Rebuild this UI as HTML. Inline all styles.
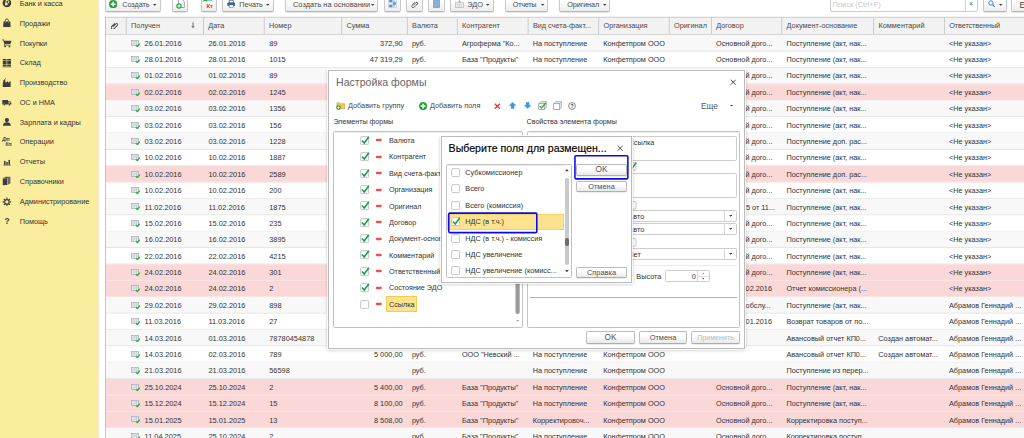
<!DOCTYPE html>
<html><head><meta charset="utf-8"><title>1C</title>
<style>
*{box-sizing:border-box;margin:0;padding:0}
html,body{width:1024px;height:438px;overflow:hidden;background:#fff}
body{font-family:"Liberation Sans",sans-serif;font-size:7.3px;color:#333;position:relative}
.a{position:absolute;white-space:nowrap}
.t{height:12px;line-height:12px}
#side{left:0;top:0;width:98px;height:438px;background:#fbed9e}
#sideshadow{left:98px;top:0;width:2px;height:438px;background:linear-gradient(90deg,#ebe5c4,#fff)}
.btn{top:-6px;height:18px;border:1px solid #c8c8c8;border-bottom-color:#b6b6b6;border-radius:2px;background:linear-gradient(#fff 35%,#ececec);box-shadow:0 0.6px 0.8px rgba(0,0,0,.11)}
.dlg{background:#fff;box-shadow:0 0 0 1px rgba(255,255,255,.8),0 0.5px 3px 1px rgba(0,0,0,.2);border:1px solid #bbbbbb}
.box{border:1px solid #c2c2c2;border-radius:1.5px;background:#fff;box-shadow:inset 0 1px 0.5px #ececec}
.inp{border:1px solid #cdcdcd;border-radius:1.5px;background:#fff}
.dbtn{border:1px solid #bcbcbc;border-bottom-color:#adadad;border-radius:2px;background:linear-gradient(#fff 35%,#e9e9e9);box-shadow:0 0.6px 0.6px rgba(0,0,0,.15)}
.d{font-size:7.4px}
</style></head><body>
<svg width="0" height="0" style="position:absolute"><defs>
<symbol id="doc" viewBox="0 0 9 7.5"><rect x="0.4" y="0.5" width="7" height="4.9" fill="#e8ecf1" stroke="#a3abb8" stroke-width="0.7"/><path d="M1.4 1.9h3.6M1.4 3h3.6M1.4 4.1h2.6" stroke="#bcc3cd" stroke-width="0.55"/><path d="M5.7 0.8v4.4" stroke="#aab2be" stroke-width="0.6"/><path d="M4.9 5.1l1.5 1.6l2.4-3" fill="none" stroke="#2fae3a" stroke-width="1.3"/></symbol>
<symbol id="plus" viewBox="0 0 8 8"><circle cx="4" cy="4" r="3.9" fill="#25a23c"/><path d="M4 1.7v4.6M1.7 4h4.6" stroke="#fff" stroke-width="1.5"/></symbol>
<symbol id="copydoc" viewBox="0 0 9 10"><path d="M2.5 0.4h3.5l2.3 2.3v5.8h-5.8z" fill="#fff" stroke="#6e7f99" stroke-width="0.7"/><circle cx="3" cy="7" r="2.7" fill="#25a23c"/><path d="M3 5.3v3.4M1.3 7h3.4" stroke="#fff" stroke-width="1"/></symbol>
<symbol id="printer" viewBox="0 0 10 9"><rect x="2.5" y="0.4" width="5" height="3" fill="#fff" stroke="#3b5a88" stroke-width="0.7"/><rect x="0.4" y="3" width="9.2" height="3.8" rx="0.8" fill="#3b5f96"/><rect x="2.5" y="5.6" width="5" height="3" fill="#fff" stroke="#3b5a88" stroke-width="0.7"/></symbol>
<symbol id="struct" viewBox="0 0 9 9"><rect x="0.3" y="0.3" width="8.4" height="8.4" fill="#e4edf6" stroke="#a9c1dc" stroke-width="0.5"/><rect x="1.200" y="1" width="3" height="2.3" fill="#5b8fc4"/><rect x="4.8" y="3.4" width="3" height="2.3" fill="#5b8fc4"/><rect x="1.200" y="5.800" width="3" height="2.3" fill="#5b8fc4"/><path d="M4.2 2.1h2.100v1.300M6.300 5.700v1.300h-2.100" fill="none" stroke="#6f9ccc" stroke-width="0.7"/></symbol>
<symbol id="clip" viewBox="0 0 9 9"><path d="M2.2 5.8l3.6-3.6a1.2 1.2 0 0 1 1.8 1.8l-4 4a1.9 1.9 0 0 1-2.7-2.7l3.8-3.8" fill="none" stroke="#777" stroke-width="0.9"/></symbol>
<symbol id="clip2" viewBox="0 0 9 9"><path d="M2.2 5.8l3.6-3.6a1.2 1.2 0 0 1 1.8 1.8l-4 4a1.9 1.9 0 0 1-2.7-2.7l3.8-3.800" fill="none" stroke="#555" stroke-width="1.25"/></symbol>
<symbol id="sheet" viewBox="0 0 7 9"><rect x="0.4" y="0.4" width="6.2" height="8.2" fill="#7ea6cf" stroke="#6d97c3" stroke-width="0.6"/><path d="M1.2 2.3h4.600M1.200 3.900h4.600M1.200 5.500h4.600M1.200 7.100h4.600" stroke="#a9c4e0" stroke-width="0.6"/></symbol>
<symbol id="edo" viewBox="0 0 9 9"><rect x="0.5" y="3.800" width="8" height="4.600" fill="#efefef" stroke="#b3b3b3" stroke-width="0.7"/><path d="M2 5.400h5M2 6.900h5" stroke="#c2c2c2" stroke-width="0.6"/><path d="M4.500 0.300v3M3.100 1.900l1.400 1.500l1.400-1.500" fill="none" stroke="#ababab" stroke-width="0.8"/></symbol>
<symbol id="mag" viewBox="0 0 8 8"><circle cx="3.1" cy="3.1" r="2.3" fill="#eef5fc" stroke="#3f84cc" stroke-width="1"/><path d="M4.800 4.800l2.500 2.500" stroke="#3f84cc" stroke-width="1.3"/></symbol>
<symbol id="cbon" viewBox="0 0 9 9"><rect x="0.6" y="0.6" width="7.4" height="7.4" rx="1" fill="#fff" stroke="#b0b0b0" stroke-width="0.7"/><path d="M1.9 4.1l2 2.4L8.3 0.6" fill="none" stroke="#17a047" stroke-width="1.5"/></symbol>
<symbol id="cboff" viewBox="0 0 9 9"><rect x="0.6" y="0.6" width="7.4" height="7.4" rx="1" fill="#fff" stroke="#b0b0b0" stroke-width="0.7"/></symbol>
<symbol id="folderplus" viewBox="0 0 10 10"><path d="M1 2h3l0.8 1H9.5V8.5H1z" fill="#f2c75c" stroke="#c79a2b" stroke-width="0.6"/><circle cx="2.7" cy="7.2" r="2.5" fill="#25a23c"/><path d="M2.7 5.7v3M1.2 7.2h3" stroke="#fff" stroke-width="0.9"/></symbol>
<symbol id="chkall" viewBox="0 0 9 9"><path d="M0.6 2.7L2.6 0.6H8.5V6.3L6.6 8.4" fill="#dfe6ec" stroke="#8fa0b0" stroke-width="0.6"/><path d="M6.6 2.700L8.5 0.6" stroke="#8fa0b0" stroke-width="0.6"/><rect x="0.6" y="2.7" width="6" height="5.7" fill="#fff" stroke="#7f92a5" stroke-width="0.7"/><path d="M1.700 5.2l1.700 1.800L7.700 2" fill="none" stroke="#45ac2a" stroke-width="1.5"/></symbol>
<symbol id="unchkall" viewBox="0 0 9 9"><path d="M0.6 2.7L2.6 0.6H8.5V6.3L6.6 8.4" fill="#dfe6ec" stroke="#8fa0b0" stroke-width="0.6"/><path d="M6.6 2.700L8.5 0.6" stroke="#8fa0b0" stroke-width="0.6"/><rect x="0.6" y="2.7" width="6" height="5.7" fill="#fff" stroke="#7f92a5" stroke-width="0.7"/></symbol>
<symbol id="s0" viewBox="0 0 10 10"><circle cx="5" cy="5" r="4.4" fill="#3d3d3d"/><path d="M4.1 7.8V2.500h1.500a1.450 1.450 0 0 1 0 2.900H3.100M3.100 6.600h2.700" fill="none" stroke="#fbed9e" stroke-width="1"/></symbol>
<symbol id="s1" viewBox="0 0 10 10"><path d="M1.5 3.6h7l0.3 5.6H1.2z" fill="#3d3d3d"/><path d="M3.4 4.6V2.6a1.6 1.6 0 0 1 3.2 0v2" fill="none" stroke="#3d3d3d" stroke-width="0.9"/><path d="M3.4 3.8v1M6.6 3.8v1" stroke="#fbed9e" stroke-width="0.6"/></symbol>
<symbol id="s2" viewBox="0 0 10 10"><path d="M0.3 1.6h1.6l0.5 1.2h7.3l-1.2 3.6H3l-0.3 0.9h6v0.7H1.7l0.7-1.7L1.3 2.4H0.3z" fill="#3d3d3d"/><circle cx="3.2" cy="8.8" r="0.9" fill="#3d3d3d"/><circle cx="7.6" cy="8.8" r="0.9" fill="#3d3d3d"/></symbol>
<symbol id="s3" viewBox="0 0 10 10"><rect x="0.8" y="1" width="3.9" height="1.6" fill="#3d3d3d"/><rect x="5.3" y="1" width="3.9" height="1.6" fill="#3d3d3d"/><rect x="0.8" y="3.1" width="3.9" height="3" fill="#3d3d3d"/><rect x="5.3" y="3.1" width="3.9" height="3" fill="#3d3d3d"/><rect x="0.8" y="6.6" width="3.9" height="2" fill="#3d3d3d"/><rect x="5.3" y="6.6" width="3.9" height="2" fill="#3d3d3d"/><rect x="0.5" y="8.9" width="9" height="0.6" fill="#3d3d3d"/></symbol>
<symbol id="s4" viewBox="0 0 10 10"><path d="M0.8 9.2V5.2l1-3.4h1.4l0.6 3 2.4-1.8v1.8l2.6-1.8v6.2z" fill="#3d3d3d"/><path d="M2.6 1.5l1.3-1" stroke="#3d3d3d" stroke-width="0.8"/></symbol>
<symbol id="s5" viewBox="0 0 10 10"><path d="M0.3 3h5.9v4.6H0.3zM6.5 4.2h1.8l1.3 1.6v1.8H6.5z" fill="#3d3d3d"/><circle cx="2.3" cy="7.9" r="1.1" fill="#3d3d3d" stroke="#fbed9e" stroke-width="0.4"/><circle cx="7.6" cy="7.9" r="1.1" fill="#3d3d3d" stroke="#fbed9e" stroke-width="0.4"/><rect x="7.1" y="4.8" width="1.5" height="1.1" fill="#fbed9e"/></symbol>
<symbol id="s6" viewBox="0 0 10 10"><circle cx="5" cy="3.1" r="2.2" fill="#3d3d3d"/><path d="M1 9c0-2.6 1.6-3.6 4-3.6S9 6.400 9 9z" fill="#3d3d3d"/></symbol>
<symbol id="s7" viewBox="0 0 10 10"><text x="0.2" y="4.4" font-size="4.8" font-family="Liberation Sans" font-weight="bold" font-style="italic" fill="#3d3d3d">Дт</text><text x="3.6" y="9" font-size="4.6" font-family="Liberation Sans" font-weight="bold" font-style="italic" fill="#3d3d3d">Кт</text></symbol>
<symbol id="s8" viewBox="0 0 10 10"><rect x="2" y="4" width="1.600" height="3.800" fill="#3d3d3d"/><rect x="4.3" y="5.200" width="1.600" height="2.600" fill="#3d3d3d"/><rect x="6.600" y="3" width="1.600" height="4.800" fill="#3d3d3d"/><rect x="1.300" y="7.800" width="7.600" height="0.800" fill="#3d3d3d"/></symbol>
<symbol id="s9" viewBox="0 0 10 10"><path d="M0.8 2.6l4.6-0.4v7L0.8 9.4z" fill="#3d3d3d"/><path d="M5.8 2.1l2.8-1.3v6.6L5.8 9.1z" fill="#6a6a6a"/><path d="M0.8 2.4l3.2-1.6h4.6l-3 1.4z" fill="#555"/></symbol>
<symbol id="s10" viewBox="0 0 10 10"><circle cx="5" cy="5" r="2.3" fill="none" stroke="#3d3d3d" stroke-width="1.2"/><path d="M5 0.6v1.7M5 7.7v1.7M0.6 5h1.7M7.7 5h1.7M1.9 1.9l1.2 1.2M6.9 6.9l1.2 1.2M8.1 1.9L6.9 3.1M3.1 6.9L1.9 8.1" stroke="#3d3d3d" stroke-width="1.1"/></symbol>
<symbol id="s11" viewBox="0 0 10 10"><text x="5.3" y="8.400" font-size="8.600" font-family="Liberation Sans" font-weight="bold" text-anchor="middle" fill="#3d3d3d">?</text></symbol>
</defs></svg>

<div id="side" class="a"></div><div id="sideshadow" class="a"></div>
<div class="a t " style="left:19.7px;top:-2px;">Банк и касса</div>
<svg class="a" style="left:2.2px;top:-1.60px" width="9.8" height="9.8" viewBox="0 0 10 10"><use href="#s0"/></svg>
<div class="a t " style="left:19.7px;top:18px;">Продажи</div>
<svg class="a" style="left:2.2px;top:18.20px" width="9.8" height="9.8" viewBox="0 0 10 10"><use href="#s1"/></svg>
<div class="a t " style="left:19.7px;top:38px;">Покупки</div>
<svg class="a" style="left:2.2px;top:37.80px" width="9.8" height="9.8" viewBox="0 0 10 10"><use href="#s2"/></svg>
<div class="a t " style="left:19.7px;top:57px;">Склад</div>
<svg class="a" style="left:2.2px;top:57.80px" width="9.8" height="9.8" viewBox="0 0 10 10"><use href="#s3"/></svg>
<div class="a t " style="left:19.7px;top:77px;">Производство</div>
<svg class="a" style="left:2.2px;top:77.60px" width="9.8" height="9.8" viewBox="0 0 10 10"><use href="#s4"/></svg>
<div class="a t " style="left:19.7px;top:97px;">ОС и НМА</div>
<svg class="a" style="left:2.2px;top:97.40px" width="9.8" height="9.8" viewBox="0 0 10 10"><use href="#s5"/></svg>
<div class="a t " style="left:19.7px;top:117px;">Зарплата и кадры</div>
<svg class="a" style="left:2.2px;top:117.20px" width="9.8" height="9.8" viewBox="0 0 10 10"><use href="#s6"/></svg>
<div class="a t " style="left:19.7px;top:136px;">Операции</div>
<svg class="a" style="left:2.2px;top:137.00px" width="9.8" height="9.8" viewBox="0 0 10 10"><use href="#s7"/></svg>
<div class="a t " style="left:19.7px;top:156px;">Отчеты</div>
<svg class="a" style="left:2.2px;top:156.80px" width="9.8" height="9.8" viewBox="0 0 10 10"><use href="#s8"/></svg>
<div class="a t " style="left:19.7px;top:176px;">Справочники</div>
<svg class="a" style="left:2.2px;top:176.30px" width="9.8" height="9.8" viewBox="0 0 10 10"><use href="#s9"/></svg>
<div class="a t " style="left:19.7px;top:196px;">Администрирование</div>
<svg class="a" style="left:2.2px;top:197.00px" width="9.8" height="9.8" viewBox="0 0 10 10"><use href="#s10"/></svg>
<div class="a t " style="left:19.7px;top:216px;">Помощь</div>
<svg class="a" style="left:2.2px;top:216.20px" width="9.8" height="9.8" viewBox="0 0 10 10"><use href="#s11"/></svg>
<svg class="a" style="left:0;top:0" width="1024" height="438" viewBox="0 0 1024 438"><rect x="105.3" y="17" width="920" height="17.6" fill="#f2f2f2"/><rect x="105.6" y="35.10" width="920" height="16.37" fill="#f8f8f8"/><rect x="105.6" y="50.72" width="920" height="0.75" fill="#e2e2e2"/><rect x="105.6" y="67.09" width="920" height="0.75" fill="#e2e2e2"/><rect x="105.6" y="67.84" width="920" height="16.37" fill="#f8f8f8"/><rect x="105.6" y="83.47" width="920" height="0.75" fill="#e2e2e2"/><rect x="105.6" y="84.22" width="920" height="16.37" fill="#fad8d8"/><rect x="105.6" y="99.84" width="920" height="0.75" fill="#fce9e9"/><rect x="105.6" y="100.59" width="920" height="16.37" fill="#f8f8f8"/><rect x="105.6" y="116.21" width="920" height="0.75" fill="#e2e2e2"/><rect x="105.6" y="132.58" width="920" height="0.75" fill="#e2e2e2"/><rect x="105.6" y="133.33" width="920" height="16.37" fill="#f8f8f8"/><rect x="105.6" y="148.95" width="920" height="0.75" fill="#e2e2e2"/><rect x="105.6" y="165.33" width="920" height="0.75" fill="#e2e2e2"/><rect x="105.6" y="166.08" width="920" height="16.37" fill="#fad8d8"/><rect x="105.6" y="181.70" width="920" height="0.75" fill="#fce9e9"/><rect x="105.6" y="198.07" width="920" height="0.75" fill="#e2e2e2"/><rect x="105.6" y="198.82" width="920" height="16.37" fill="#f8f8f8"/><rect x="105.6" y="214.44" width="920" height="0.75" fill="#e2e2e2"/><rect x="105.6" y="230.81" width="920" height="0.75" fill="#e2e2e2"/><rect x="105.6" y="231.56" width="920" height="16.37" fill="#f8f8f8"/><rect x="105.6" y="247.19" width="920" height="0.75" fill="#e2e2e2"/><rect x="105.6" y="263.56" width="920" height="0.75" fill="#e2e2e2"/><rect x="105.6" y="264.31" width="920" height="16.37" fill="#fad8d8"/><rect x="105.6" y="279.93" width="920" height="0.75" fill="#fce9e9"/><rect x="105.6" y="280.68" width="920" height="16.37" fill="#fad8d8"/><rect x="105.6" y="296.30" width="920" height="0.75" fill="#fce9e9"/><rect x="105.6" y="297.05" width="920" height="16.37" fill="#f8f8f8"/><rect x="105.6" y="312.67" width="920" height="0.75" fill="#e2e2e2"/><rect x="105.6" y="329.05" width="920" height="0.75" fill="#e2e2e2"/><rect x="105.6" y="329.80" width="920" height="16.37" fill="#f8f8f8"/><rect x="105.6" y="345.42" width="920" height="0.75" fill="#e2e2e2"/><rect x="105.6" y="361.79" width="920" height="0.75" fill="#e2e2e2"/><rect x="105.6" y="362.54" width="920" height="16.37" fill="#f8f8f8"/><rect x="105.6" y="378.16" width="920" height="0.75" fill="#e2e2e2"/><rect x="105.6" y="378.91" width="920" height="16.37" fill="#fad8d8"/><rect x="105.6" y="394.53" width="920" height="0.75" fill="#fce9e9"/><rect x="105.6" y="395.28" width="920" height="16.37" fill="#fad8d8"/><rect x="105.6" y="410.91" width="920" height="0.75" fill="#fce9e9"/><rect x="105.6" y="411.66" width="920" height="16.37" fill="#fad8d8"/><rect x="105.6" y="427.28" width="920" height="0.75" fill="#fce9e9"/><rect x="105.6" y="428.03" width="920" height="16.37" fill="#f8f8f8"/><rect x="105.6" y="443.65" width="920" height="0.75" fill="#e2e2e2"/><rect x="105.3" y="16.8" width="920" height="0.8" fill="#c2c2c2"/><rect x="105.3" y="34.1" width="920" height="0.8" fill="#cdcdcd"/><rect x="125.80" y="17.5" width="0.8" height="16.8" fill="#c2c2c2"/><rect x="203.00" y="17.5" width="0.8" height="16.8" fill="#c2c2c2"/><rect x="263.80" y="17.5" width="0.8" height="16.8" fill="#c2c2c2"/><rect x="341.30" y="17.5" width="0.8" height="16.8" fill="#c2c2c2"/><rect x="406.90" y="17.5" width="0.8" height="16.8" fill="#c2c2c2"/><rect x="456.90" y="17.5" width="0.8" height="16.8" fill="#c2c2c2"/><rect x="527.70" y="17.5" width="0.8" height="16.8" fill="#c2c2c2"/><rect x="598.30" y="17.5" width="0.8" height="16.8" fill="#c2c2c2"/><rect x="668.80" y="17.5" width="0.8" height="16.8" fill="#c2c2c2"/><rect x="711.00" y="17.5" width="0.8" height="16.8" fill="#c2c2c2"/><rect x="781.40" y="17.5" width="0.8" height="16.8" fill="#c2c2c2"/><rect x="873.30" y="17.5" width="0.8" height="16.8" fill="#c2c2c2"/><rect x="944.00" y="17.5" width="0.8" height="16.8" fill="#c2c2c2"/><rect x="105" y="16.8" width="0.8" height="422" fill="#b8b8b8"/></svg>
<svg class="a" style="left:110.6px;top:21.8px" width="7.6" height="7.6" viewBox="0 0 9 9"><use href="#clip2"/></svg>
<div class="a t " style="left:131.0px;top:20px;color:#4a4a4a;">Получен</div>
<div class="a t " style="left:208.2px;top:20px;color:#4a4a4a;">Дата</div>
<div class="a t " style="left:269.0px;top:20px;color:#4a4a4a;">Номер</div>
<div class="a t " style="left:346.5px;top:20px;color:#4a4a4a;">Сумма</div>
<div class="a t " style="left:412.1px;top:20px;color:#4a4a4a;">Валюта</div>
<div class="a t " style="left:462.1px;top:20px;color:#4a4a4a;">Контрагент</div>
<div class="a t " style="left:532.9px;top:20px;color:#4a4a4a;">Вид счета-факт...</div>
<div class="a t " style="left:603.5px;top:20px;color:#4a4a4a;">Организация</div>
<div class="a t " style="left:674.0px;top:20px;color:#4a4a4a;">Оригинал</div>
<div class="a t " style="left:716.2px;top:20px;color:#4a4a4a;">Договор</div>
<div class="a t " style="left:786.6px;top:20px;color:#4a4a4a;">Документ-основание</div>
<div class="a t " style="left:878.5px;top:20px;color:#4a4a4a;">Комментарий</div>
<div class="a t " style="left:949.2px;top:20px;color:#4a4a4a;letter-spacing:-0.1px;">Ответственный</div>
<svg class="a" style="left:191.4px;top:22.4px" width="4" height="6.2" viewBox="0 0 4 6.2"><path d="M2 0.2v5.2M0.6 4l1.400 1.600l1.400-1.600" fill="none" stroke="#444" stroke-width="0.75"/></svg>
<svg class="a" style="left:131.3px;top:39.60px" width="9" height="7.5" viewBox="0 0 9 7.5"><use href="#doc"/></svg>
<div class="a t d" style="left:144.6px;top:38px;">26.01.2016</div>
<div class="a t d" style="left:208.4px;top:38px;width:54.8px;overflow:hidden;">26.01.2016</div>
<div class="a t d" style="left:269.2px;top:38px;width:71.5px;overflow:hidden;">89</div>
<div class="a t d" style="left:341.7px;top:38px;width:61.0px;overflow:hidden;text-align:right;">372,90</div>
<div class="a t " style="left:411.9px;top:38px;width:44.4px;overflow:hidden;">руб.</div>
<div class="a t " style="left:461.9px;top:38px;width:65.2px;overflow:hidden;">Агроферма "Ко...</div>
<div class="a t " style="left:532.7px;top:38px;width:65.0px;overflow:hidden;">На поступление</div>
<div class="a t " style="left:603.3px;top:38px;width:64.9px;overflow:hidden;">Конфетпром ООО</div>
<div class="a t " style="left:716.0px;top:38px;width:64.8px;overflow:hidden;">Основной дого...</div>
<div class="a t " style="left:786.4px;top:38px;width:86.3px;overflow:hidden;">Поступление (акт, нак...</div>
<div class="a t " style="left:949.0px;top:38px;width:80.0px;overflow:hidden;">&lt;Не указан&gt;</div>
<svg class="a" style="left:131.3px;top:55.99px" width="9" height="7.5" viewBox="0 0 9 7.5"><use href="#doc"/></svg>
<div class="a t d" style="left:144.6px;top:54px;">28.01.2016</div>
<div class="a t d" style="left:208.4px;top:54px;width:54.8px;overflow:hidden;">28.01.2016</div>
<div class="a t d" style="left:269.2px;top:54px;width:71.5px;overflow:hidden;">1015</div>
<div class="a t d" style="left:341.7px;top:54px;width:61.0px;overflow:hidden;text-align:right;">47 319,29</div>
<div class="a t " style="left:411.9px;top:54px;width:44.4px;overflow:hidden;">руб.</div>
<div class="a t " style="left:461.9px;top:54px;width:65.2px;overflow:hidden;">База "Продукты"</div>
<div class="a t " style="left:532.7px;top:54px;width:65.0px;overflow:hidden;">На поступление</div>
<div class="a t " style="left:603.3px;top:54px;width:64.9px;overflow:hidden;">Конфетпром ООО</div>
<div class="a t " style="left:716.0px;top:54px;width:64.8px;overflow:hidden;">Основной дого...</div>
<div class="a t " style="left:786.4px;top:54px;width:86.3px;overflow:hidden;">Поступление (акт, нак...</div>
<div class="a t " style="left:949.0px;top:54px;width:80.0px;overflow:hidden;">&lt;Не указан&gt;</div>
<svg class="a" style="left:131.3px;top:72.37px" width="9" height="7.5" viewBox="0 0 9 7.5"><use href="#doc"/></svg>
<div class="a t d" style="left:144.6px;top:70px;">01.02.2016</div>
<div class="a t d" style="left:208.4px;top:70px;width:54.8px;overflow:hidden;">01.02.2016</div>
<div class="a t d" style="left:269.2px;top:70px;width:71.5px;overflow:hidden;">89</div>
<div class="a t " style="left:716.0px;top:70px;width:64.8px;overflow:hidden;">Основной дого...</div>
<div class="a t " style="left:786.4px;top:70px;width:86.3px;overflow:hidden;">Поступление (акт, нак...</div>
<div class="a t " style="left:949.0px;top:70px;width:80.0px;overflow:hidden;">&lt;Не указан&gt;</div>
<svg class="a" style="left:131.3px;top:88.76px" width="9" height="7.5" viewBox="0 0 9 7.5"><use href="#doc"/></svg>
<div class="a t d" style="left:144.6px;top:87px;">02.02.2016</div>
<div class="a t d" style="left:208.4px;top:87px;width:54.8px;overflow:hidden;">02.02.2016</div>
<div class="a t d" style="left:269.2px;top:87px;width:71.5px;overflow:hidden;">1245</div>
<div class="a t " style="left:716.0px;top:87px;width:64.8px;overflow:hidden;">Основной дого...</div>
<div class="a t " style="left:786.4px;top:87px;width:86.3px;overflow:hidden;">Поступление (акт, нак...</div>
<div class="a t " style="left:949.0px;top:87px;width:80.0px;overflow:hidden;">&lt;Не указан&gt;</div>
<svg class="a" style="left:131.3px;top:105.14px" width="9" height="7.5" viewBox="0 0 9 7.5"><use href="#doc"/></svg>
<div class="a t d" style="left:144.6px;top:103px;">03.02.2016</div>
<div class="a t d" style="left:208.4px;top:103px;width:54.8px;overflow:hidden;">03.02.2016</div>
<div class="a t d" style="left:269.2px;top:103px;width:71.5px;overflow:hidden;">1356</div>
<div class="a t " style="left:716.0px;top:103px;width:64.8px;overflow:hidden;">Основной дого...</div>
<div class="a t " style="left:786.4px;top:103px;width:86.3px;overflow:hidden;">Поступление (акт, нак...</div>
<div class="a t " style="left:949.0px;top:103px;width:80.0px;overflow:hidden;">&lt;Не указан&gt;</div>
<svg class="a" style="left:131.3px;top:121.53px" width="9" height="7.5" viewBox="0 0 9 7.5"><use href="#doc"/></svg>
<div class="a t d" style="left:144.6px;top:120px;">03.02.2016</div>
<div class="a t d" style="left:208.4px;top:120px;width:54.8px;overflow:hidden;">03.02.2016</div>
<div class="a t d" style="left:269.2px;top:120px;width:71.5px;overflow:hidden;">156</div>
<div class="a t " style="left:716.0px;top:120px;width:64.8px;overflow:hidden;">Основной дого...</div>
<div class="a t " style="left:786.4px;top:120px;width:86.3px;overflow:hidden;">Поступление (акт, нак...</div>
<div class="a t " style="left:949.0px;top:120px;width:80.0px;overflow:hidden;">&lt;Не указан&gt;</div>
<svg class="a" style="left:131.3px;top:137.91px" width="9" height="7.5" viewBox="0 0 9 7.5"><use href="#doc"/></svg>
<div class="a t d" style="left:144.6px;top:136px;">03.02.2016</div>
<div class="a t d" style="left:208.4px;top:136px;width:54.8px;overflow:hidden;">03.02.2016</div>
<div class="a t d" style="left:269.2px;top:136px;width:71.5px;overflow:hidden;">1228</div>
<div class="a t " style="left:716.0px;top:136px;width:64.8px;overflow:hidden;">Основной дого...</div>
<div class="a t " style="left:786.4px;top:136px;width:86.3px;overflow:hidden;">Поступление доп. рас...</div>
<div class="a t " style="left:949.0px;top:136px;width:80.0px;overflow:hidden;">&lt;Не указан&gt;</div>
<svg class="a" style="left:131.3px;top:154.30px" width="9" height="7.5" viewBox="0 0 9 7.5"><use href="#doc"/></svg>
<div class="a t d" style="left:144.6px;top:152px;">10.02.2016</div>
<div class="a t d" style="left:208.4px;top:152px;width:54.8px;overflow:hidden;">10.02.2016</div>
<div class="a t d" style="left:269.2px;top:152px;width:71.5px;overflow:hidden;">1887</div>
<div class="a t " style="left:716.0px;top:152px;width:64.8px;overflow:hidden;">Основной дого...</div>
<div class="a t " style="left:786.4px;top:152px;width:86.3px;overflow:hidden;">Поступление (акт, нак...</div>
<div class="a t " style="left:949.0px;top:152px;width:80.0px;overflow:hidden;">&lt;Не указан&gt;</div>
<svg class="a" style="left:131.3px;top:170.68px" width="9" height="7.5" viewBox="0 0 9 7.5"><use href="#doc"/></svg>
<div class="a t d" style="left:144.6px;top:169px;">10.02.2016</div>
<div class="a t d" style="left:208.4px;top:169px;width:54.8px;overflow:hidden;">10.02.2016</div>
<div class="a t d" style="left:269.2px;top:169px;width:71.5px;overflow:hidden;">2589</div>
<div class="a t " style="left:716.0px;top:169px;width:64.8px;overflow:hidden;">Основной дого...</div>
<div class="a t " style="left:786.4px;top:169px;width:86.3px;overflow:hidden;">Поступление доп. рас...</div>
<div class="a t " style="left:949.0px;top:169px;width:80.0px;overflow:hidden;">&lt;Не указан&gt;</div>
<svg class="a" style="left:131.3px;top:187.07px" width="9" height="7.5" viewBox="0 0 9 7.5"><use href="#doc"/></svg>
<div class="a t d" style="left:144.6px;top:185px;">10.02.2016</div>
<div class="a t d" style="left:208.4px;top:185px;width:54.8px;overflow:hidden;">10.02.2016</div>
<div class="a t d" style="left:269.2px;top:185px;width:71.5px;overflow:hidden;">200</div>
<div class="a t " style="left:716.0px;top:185px;width:64.8px;overflow:hidden;">Основной дого...</div>
<div class="a t " style="left:786.4px;top:185px;width:86.3px;overflow:hidden;">Поступление (акт, нак...</div>
<div class="a t " style="left:949.0px;top:185px;width:80.0px;overflow:hidden;">&lt;Не указан&gt;</div>
<svg class="a" style="left:131.3px;top:203.45px" width="9" height="7.5" viewBox="0 0 9 7.5"><use href="#doc"/></svg>
<div class="a t d" style="left:144.6px;top:202px;">11.02.2016</div>
<div class="a t d" style="left:208.4px;top:202px;width:54.8px;overflow:hidden;">11.02.2016</div>
<div class="a t d" style="left:269.2px;top:202px;width:71.5px;overflow:hidden;">1875</div>
<div class="a t " style="left:716.0px;top:202px;width:64.8px;overflow:hidden;">Договор-5 от 11...</div>
<div class="a t " style="left:786.4px;top:202px;width:86.3px;overflow:hidden;">Поступление (акт, нак...</div>
<div class="a t " style="left:949.0px;top:202px;width:80.0px;overflow:hidden;">&lt;Не указан&gt;</div>
<svg class="a" style="left:131.3px;top:219.84px" width="9" height="7.5" viewBox="0 0 9 7.5"><use href="#doc"/></svg>
<div class="a t d" style="left:144.6px;top:218px;">15.02.2016</div>
<div class="a t d" style="left:208.4px;top:218px;width:54.8px;overflow:hidden;">15.02.2016</div>
<div class="a t d" style="left:269.2px;top:218px;width:71.5px;overflow:hidden;">235</div>
<div class="a t " style="left:716.0px;top:218px;width:64.8px;overflow:hidden;">Основной дого...</div>
<div class="a t " style="left:786.4px;top:218px;width:86.3px;overflow:hidden;">Поступление (акт, нак...</div>
<div class="a t " style="left:949.0px;top:218px;width:80.0px;overflow:hidden;">&lt;Не указан&gt;</div>
<svg class="a" style="left:131.3px;top:236.22px" width="9" height="7.5" viewBox="0 0 9 7.5"><use href="#doc"/></svg>
<div class="a t d" style="left:144.6px;top:234px;">16.02.2016</div>
<div class="a t d" style="left:208.4px;top:234px;width:54.8px;overflow:hidden;">16.02.2016</div>
<div class="a t d" style="left:269.2px;top:234px;width:71.5px;overflow:hidden;">3895</div>
<div class="a t " style="left:716.0px;top:234px;width:64.8px;overflow:hidden;">Основной дого...</div>
<div class="a t " style="left:786.4px;top:234px;width:86.3px;overflow:hidden;">Поступление (акт, нак...</div>
<div class="a t " style="left:949.0px;top:234px;width:80.0px;overflow:hidden;">&lt;Не указан&gt;</div>
<svg class="a" style="left:131.3px;top:252.61px" width="9" height="7.5" viewBox="0 0 9 7.5"><use href="#doc"/></svg>
<div class="a t d" style="left:144.6px;top:251px;">22.02.2016</div>
<div class="a t d" style="left:208.4px;top:251px;width:54.8px;overflow:hidden;">22.02.2016</div>
<div class="a t d" style="left:269.2px;top:251px;width:71.5px;overflow:hidden;">4215</div>
<div class="a t " style="left:716.0px;top:251px;width:64.8px;overflow:hidden;">Основной дого...</div>
<div class="a t " style="left:786.4px;top:251px;width:86.3px;overflow:hidden;">Поступление (акт, нак...</div>
<div class="a t " style="left:949.0px;top:251px;width:80.0px;overflow:hidden;">&lt;Не указан&gt;</div>
<svg class="a" style="left:131.3px;top:268.99px" width="9" height="7.5" viewBox="0 0 9 7.5"><use href="#doc"/></svg>
<div class="a t d" style="left:144.6px;top:267px;">24.02.2016</div>
<div class="a t d" style="left:208.4px;top:267px;width:54.8px;overflow:hidden;">24.02.2016</div>
<div class="a t d" style="left:269.2px;top:267px;width:71.5px;overflow:hidden;">301</div>
<div class="a t " style="left:716.0px;top:267px;width:64.8px;overflow:hidden;">Основной дого...</div>
<div class="a t " style="left:786.4px;top:267px;width:86.3px;overflow:hidden;">Поступление (акт, нак...</div>
<div class="a t " style="left:949.0px;top:267px;width:80.0px;overflow:hidden;">&lt;Не указан&gt;</div>
<svg class="a" style="left:131.3px;top:285.38px" width="9" height="7.5" viewBox="0 0 9 7.5"><use href="#doc"/></svg>
<div class="a t d" style="left:144.6px;top:283px;">24.02.2016</div>
<div class="a t d" style="left:208.4px;top:283px;width:54.8px;overflow:hidden;">24.02.2016</div>
<div class="a t d" style="left:269.2px;top:283px;width:71.5px;overflow:hidden;">2</div>
<div class="a t " style="left:716.0px;top:283px;width:64.8px;overflow:hidden;">Договор 02.2016</div>
<div class="a t " style="left:786.4px;top:283px;width:86.3px;overflow:hidden;">Отчет комиссионера (...</div>
<div class="a t " style="left:949.0px;top:283px;width:80.0px;overflow:hidden;">&lt;Не указан&gt;</div>
<svg class="a" style="left:131.3px;top:301.76px" width="9" height="7.5" viewBox="0 0 9 7.5"><use href="#doc"/></svg>
<div class="a t d" style="left:144.6px;top:300px;">29.02.2016</div>
<div class="a t d" style="left:208.4px;top:300px;width:54.8px;overflow:hidden;">29.02.2016</div>
<div class="a t d" style="left:269.2px;top:300px;width:71.5px;overflow:hidden;">898</div>
<div class="a t " style="left:716.0px;top:300px;width:64.8px;overflow:hidden;">Договор обслу...</div>
<div class="a t " style="left:786.4px;top:300px;width:86.3px;overflow:hidden;">Поступление (акт, нак...</div>
<div class="a t " style="left:949.0px;top:300px;width:80.0px;overflow:hidden;">Абрамов Геннадий ...</div>
<svg class="a" style="left:131.3px;top:318.14px" width="9" height="7.5" viewBox="0 0 9 7.5"><use href="#doc"/></svg>
<div class="a t d" style="left:144.6px;top:316px;">11.03.2016</div>
<div class="a t d" style="left:208.4px;top:316px;width:54.8px;overflow:hidden;">11.03.2016</div>
<div class="a t d" style="left:269.2px;top:316px;width:71.5px;overflow:hidden;">27</div>
<div class="a t " style="left:716.0px;top:316px;width:64.8px;overflow:hidden;">Договор 01.2016</div>
<div class="a t " style="left:786.4px;top:316px;width:86.3px;overflow:hidden;">Возврат товаров от по...</div>
<div class="a t " style="left:949.0px;top:316px;width:80.0px;overflow:hidden;">Абрамов Геннадий ...</div>
<svg class="a" style="left:131.3px;top:334.53px" width="9" height="7.5" viewBox="0 0 9 7.5"><use href="#doc"/></svg>
<div class="a t d" style="left:144.6px;top:333px;">14.03.2016</div>
<div class="a t d" style="left:208.4px;top:333px;width:54.8px;overflow:hidden;">01.03.2016</div>
<div class="a t d" style="left:269.2px;top:333px;width:71.5px;overflow:hidden;">78780454878</div>
<div class="a t " style="left:786.4px;top:333px;width:86.3px;overflow:hidden;">Авансовый отчет КП0...</div>
<div class="a t " style="left:878.3px;top:333px;width:65.1px;overflow:hidden;">Создан автомат...</div>
<div class="a t " style="left:949.0px;top:333px;width:80.0px;overflow:hidden;">Абрамов Геннадий ...</div>
<svg class="a" style="left:131.3px;top:350.92px" width="9" height="7.5" viewBox="0 0 9 7.5"><use href="#doc"/></svg>
<div class="a t d" style="left:144.6px;top:349px;">14.03.2016</div>
<div class="a t d" style="left:208.4px;top:349px;width:54.8px;overflow:hidden;">02.03.2016</div>
<div class="a t d" style="left:269.2px;top:349px;width:71.5px;overflow:hidden;">789</div>
<div class="a t d" style="left:341.7px;top:349px;width:61.0px;overflow:hidden;text-align:right;">5 000,00</div>
<div class="a t " style="left:411.9px;top:349px;width:44.4px;overflow:hidden;">руб.</div>
<div class="a t " style="left:461.9px;top:349px;width:65.2px;overflow:hidden;">ООО "Невский ...</div>
<div class="a t " style="left:532.7px;top:349px;width:65.0px;overflow:hidden;">На поступление</div>
<div class="a t " style="left:603.3px;top:349px;width:64.9px;overflow:hidden;">Конфетпром ООО</div>
<div class="a t " style="left:786.4px;top:349px;width:86.3px;overflow:hidden;">Авансовый отчет КП0...</div>
<div class="a t " style="left:878.3px;top:349px;width:65.1px;overflow:hidden;">Создан автомат...</div>
<div class="a t " style="left:949.0px;top:349px;width:80.0px;overflow:hidden;">Абрамов Геннадий ...</div>
<svg class="a" style="left:131.3px;top:367.30px" width="9" height="7.5" viewBox="0 0 9 7.5"><use href="#doc"/></svg>
<div class="a t d" style="left:144.6px;top:365px;">21.03.2016</div>
<div class="a t d" style="left:208.4px;top:365px;width:54.8px;overflow:hidden;">21.03.2016</div>
<div class="a t d" style="left:269.2px;top:365px;width:71.5px;overflow:hidden;">56598</div>
<div class="a t " style="left:411.9px;top:365px;width:44.4px;overflow:hidden;">руб.</div>
<div class="a t " style="left:532.7px;top:365px;width:65.0px;overflow:hidden;">На поступление</div>
<div class="a t " style="left:603.3px;top:365px;width:64.9px;overflow:hidden;">Конфетпром ООО</div>
<div class="a t " style="left:786.4px;top:365px;width:86.3px;overflow:hidden;">Поступление из перер...</div>
<div class="a t " style="left:949.0px;top:365px;width:80.0px;overflow:hidden;">Абрамов Геннадий ...</div>
<svg class="a" style="left:131.3px;top:383.69px" width="9" height="7.5" viewBox="0 0 9 7.5"><use href="#doc"/></svg>
<div class="a t d" style="left:144.6px;top:382px;">25.10.2024</div>
<div class="a t d" style="left:208.4px;top:382px;width:54.8px;overflow:hidden;">25.10.2024</div>
<div class="a t d" style="left:269.2px;top:382px;width:71.5px;overflow:hidden;">2</div>
<div class="a t d" style="left:341.7px;top:382px;width:61.0px;overflow:hidden;text-align:right;">5 400,00</div>
<div class="a t " style="left:411.9px;top:382px;width:44.4px;overflow:hidden;">руб.</div>
<div class="a t " style="left:461.9px;top:382px;width:65.2px;overflow:hidden;">База "Продукты"</div>
<div class="a t " style="left:532.7px;top:382px;width:65.0px;overflow:hidden;">На поступление</div>
<div class="a t " style="left:603.3px;top:382px;width:64.9px;overflow:hidden;">Конфетпром ООО</div>
<div class="a t " style="left:716.0px;top:382px;width:64.8px;overflow:hidden;">Основной дого...</div>
<div class="a t " style="left:786.4px;top:382px;width:86.3px;overflow:hidden;">Поступление (акт, нак...</div>
<div class="a t " style="left:949.0px;top:382px;width:80.0px;overflow:hidden;">Абрамов Геннадий ...</div>
<svg class="a" style="left:131.3px;top:400.07px" width="9" height="7.5" viewBox="0 0 9 7.5"><use href="#doc"/></svg>
<div class="a t d" style="left:144.6px;top:398px;">15.12.2024</div>
<div class="a t d" style="left:208.4px;top:398px;width:54.8px;overflow:hidden;">15.12.2024</div>
<div class="a t d" style="left:269.2px;top:398px;width:71.5px;overflow:hidden;">15</div>
<div class="a t d" style="left:341.7px;top:398px;width:61.0px;overflow:hidden;text-align:right;">8 100,00</div>
<div class="a t " style="left:411.9px;top:398px;width:44.4px;overflow:hidden;">руб.</div>
<div class="a t " style="left:461.9px;top:398px;width:65.2px;overflow:hidden;">База "Продукты"</div>
<div class="a t " style="left:532.7px;top:398px;width:65.0px;overflow:hidden;">На поступление</div>
<div class="a t " style="left:603.3px;top:398px;width:64.9px;overflow:hidden;">Конфетпром ООО</div>
<div class="a t " style="left:716.0px;top:398px;width:64.8px;overflow:hidden;">Основной дого...</div>
<div class="a t " style="left:786.4px;top:398px;width:86.3px;overflow:hidden;">Поступление (акт, нак...</div>
<div class="a t " style="left:949.0px;top:398px;width:80.0px;overflow:hidden;">Абрамов Геннадий ...</div>
<svg class="a" style="left:131.3px;top:416.45px" width="9" height="7.5" viewBox="0 0 9 7.5"><use href="#doc"/></svg>
<div class="a t d" style="left:144.6px;top:415px;">15.01.2025</div>
<div class="a t d" style="left:208.4px;top:415px;width:54.8px;overflow:hidden;">15.01.2025</div>
<div class="a t d" style="left:269.2px;top:415px;width:71.5px;overflow:hidden;">13</div>
<div class="a t d" style="left:341.7px;top:415px;width:61.0px;overflow:hidden;text-align:right;">8 508,00</div>
<div class="a t " style="left:411.9px;top:415px;width:44.4px;overflow:hidden;">руб.</div>
<div class="a t " style="left:461.9px;top:415px;width:65.2px;overflow:hidden;">База "Продукты"</div>
<div class="a t " style="left:532.7px;top:415px;width:65.0px;overflow:hidden;">Корректировоч...</div>
<div class="a t " style="left:603.3px;top:415px;width:64.9px;overflow:hidden;">Конфетпром ООО</div>
<div class="a t " style="left:716.0px;top:415px;width:64.8px;overflow:hidden;">Основной дого...</div>
<div class="a t " style="left:786.4px;top:415px;width:86.3px;overflow:hidden;">Корректировка поступ...</div>
<div class="a t " style="left:949.0px;top:415px;width:80.0px;overflow:hidden;">Абрамов Геннадий ...</div>
<svg class="a" style="left:131.3px;top:432.84px" width="9" height="7.5" viewBox="0 0 9 7.5"><use href="#doc"/></svg>
<div class="a t d" style="left:144.6px;top:431px;">11.04.2025</div>
<div class="a t d" style="left:208.4px;top:431px;width:54.8px;overflow:hidden;">25.10.2024</div>
<div class="a t d" style="left:269.2px;top:431px;width:71.5px;overflow:hidden;">2</div>
<div class="a t " style="left:411.9px;top:431px;width:44.4px;overflow:hidden;">руб.</div>
<div class="a t " style="left:461.9px;top:431px;width:65.2px;overflow:hidden;">База "Продукты"</div>
<div class="a t " style="left:532.7px;top:431px;width:65.0px;overflow:hidden;">На поступление</div>
<div class="a t " style="left:603.3px;top:431px;width:64.9px;overflow:hidden;">Конфетпром ООО</div>
<div class="a t " style="left:716.0px;top:431px;width:64.8px;overflow:hidden;">Основной дого...</div>
<div class="a t " style="left:786.4px;top:431px;width:86.3px;overflow:hidden;">Корректировка поступ...</div>
<div class="a btn" style="left:105px;width:56px"></div>
<svg class="a" style="left:109.4px;top:-0.5px" width="8.4" height="8.4" viewBox="0 0 8 8"><use href="#plus"/></svg>
<div class="a t " style="left:122.2px;top:-1px;font-size:7.2px;color:#4a4a4a;">Создать</div>
<svg class="a" style="left:153.3px;top:3.9px" width="3.5" height="1.8" viewBox="0 0 3.5 1.8"><path d="M0 0H3.5L1.75 1.8z" fill="#333"/></svg>
<div class="a btn" style="left:172px;width:16px"></div>
<svg class="a" style="left:175.8px;top:-1.4px" width="9" height="10" viewBox="0 0 9 10"><use href="#copydoc"/></svg>
<div class="a btn" style="left:201px;width:16px"></div>
<div class="a" style="left:203.5px;top:-4px;font-size:5.6px;line-height:7px;color:#1e9b3c;font-weight:bold;font-style:italic">Дт</div>
<div class="a" style="left:206.4px;top:3px;font-size:6px;line-height:7px;color:#d8362c;font-weight:bold">Кт</div>
<div class="a btn" style="left:222px;width:52px"></div>
<svg class="a" style="left:226.5px;top:0.0px" width="8.6" height="7.8" viewBox="0 0 10 9"><use href="#printer"/></svg>
<div class="a t " style="left:239.3px;top:-1px;font-size:7.2px;color:#4a4a4a;">Печать</div>
<svg class="a" style="left:266.3px;top:3.9px" width="3.5" height="1.8" viewBox="0 0 3.5 1.8"><path d="M0 0H3.5L1.75 1.8z" fill="#333"/></svg>
<div class="a btn" style="left:285px;width:93px"></div>
<div class="a t " style="left:293.0px;top:-1px;font-size:7.45px;color:#4a4a4a;">Создать на основании</div>
<svg class="a" style="left:371.2px;top:3.9px" width="3.5" height="1.8" viewBox="0 0 3.5 1.8"><path d="M0 0H3.5L1.75 1.8z" fill="#333"/></svg>
<div class="a btn" style="left:384px;width:17px"></div>
<svg class="a" style="left:387.8px;top:-1.0px" width="9" height="9" viewBox="0 0 9 9"><use href="#struct"/></svg>
<div class="a btn" style="left:406px;width:17px"></div>
<svg class="a" style="left:411.0px;top:0.6px" width="7.8" height="7" viewBox="0 0 9 9"><use href="#clip2"/></svg>
<div class="a btn" style="left:428px;width:17px"></div>
<svg class="a" style="left:433.2px;top:-1.0px" width="7" height="9" viewBox="0 0 7 9"><use href="#sheet"/></svg>
<div class="a btn" style="left:450px;width:44px"></div>
<svg class="a" style="left:454.6px;top:-1.0px" width="9" height="9" viewBox="0 0 9 9"><use href="#edo"/></svg>
<div class="a t " style="left:467.3px;top:-1px;font-size:7.4px;color:#4a4a4a;">ЭДО</div>
<svg class="a" style="left:486.3px;top:3.9px" width="3.5" height="1.8" viewBox="0 0 3.5 1.8"><path d="M0 0H3.5L1.75 1.8z" fill="#333"/></svg>
<div class="a btn" style="left:505px;width:43px"></div>
<div class="a t " style="left:512.8px;top:-1px;font-size:7.3px;color:#4a4a4a;letter-spacing:-0.32px;">Отчеты</div>
<svg class="a" style="left:541.0px;top:3.9px" width="3.5" height="1.8" viewBox="0 0 3.5 1.8"><path d="M0 0H3.5L1.75 1.8z" fill="#333"/></svg>
<div class="a btn" style="left:559px;width:51px"></div>
<div class="a t " style="left:567.3px;top:-1px;font-size:7.3px;color:#4a4a4a;letter-spacing:-0.15px;">Оригинал</div>
<svg class="a" style="left:603.4px;top:3.9px" width="3.5" height="1.8" viewBox="0 0 3.5 1.8"><path d="M0 0H3.5L1.75 1.8z" fill="#333"/></svg>
<div class="a" style="left:830px;top:-6px;width:148px;height:18px;border:1px solid #cccccc;border-radius:2px;background:#fff"></div>
<div class="a t " style="left:832.6px;top:-1px;font-size:7.45px;color:#c3c8d1;">Поиск (Ctrl+F)</div>
<div class="a" style="left:965px;top:-6px;width:1px;height:17px;background:#d6d6d6"></div>
<div class="a t " style="left:968.9px;top:-2px;font-size:7px;color:#5a5a5a;">×</div>
<div class="a btn" style="left:983px;width:24px"></div>
<svg class="a" style="left:987.8px;top:0.2px" width="7.6" height="7.6" viewBox="0 0 8 8"><use href="#mag"/></svg>
<svg class="a" style="left:999.2px;top:3.9px" width="3.5" height="1.8" viewBox="0 0 3.5 1.8"><path d="M0 0H3.5L1.75 1.8z" fill="#333"/></svg>
<div class="a btn" style="left:1011px;width:29px"></div>
<div class="a t " style="left:1019.6px;top:-1px;font-size:8.3px;color:#444;">Еще</div>
<div class="a dlg" style="left:328px;top:70px;width:417px;height:279px"></div>
<div class="a t " style="left:336.0px;top:76px;font-size:10.6px;color:#666;">Настройка формы</div>
<svg class="a" style="left:729.6px;top:79.2px" width="6.400" height="6.400" viewBox="0 0 6.4 6.4"><path d="M0.7 0.7l5 5M5.700 0.700l-5 5" stroke="#4c4c4c" stroke-width="1" fill="none"/></svg>
<svg class="a" style="left:336.4px;top:101.2px" width="9.2" height="9.2" viewBox="0 0 10 10"><use href="#folderplus"/></svg>
<div class="a t " style="left:348.0px;top:100px;color:#484848;">Добавить группу</div>
<svg class="a" style="left:419.0px;top:101.5px" width="8.2" height="8.2" viewBox="0 0 8 8"><use href="#plus"/></svg>
<div class="a t " style="left:430.0px;top:100px;color:#484848;">Добавить поля</div>
<svg class="a" style="left:494.4px;top:102.6px" width="7" height="6.4" viewBox="0 0 7 6.4"><path d="M0.8 0.7l5.2 5M6 0.7l-5.2 5" stroke="#e23a30" stroke-width="1.35" fill="none"/></svg>
<svg class="a" style="left:509.2px;top:102.4px" width="7.2" height="6.8" viewBox="0 0 7.2 6.8"><path d="M3.6 0.2L7 3.5H5.1V6.5H2.1V3.500H0.2z" fill="#3a9ae4" stroke="#2a86d4" stroke-width="0.3"/></svg>
<svg class="a" style="left:523.9px;top:102.4px" width="7.2" height="6.8" viewBox="0 0 7.2 6.8"><path d="M3.6 6.6L7 3.3H5.1V0.3H2.1V3.300H0.2z" fill="#3a9ae4" stroke="#2a86d4" stroke-width="0.3"/></svg>
<svg class="a" style="left:538.0px;top:101.0px" width="9.2" height="9" viewBox="0 0 9 9"><use href="#chkall"/></svg>
<svg class="a" style="left:552.9px;top:101.0px" width="9.2" height="9" viewBox="0 0 9 9"><use href="#unchkall"/></svg>
<svg class="a" style="left:567.8px;top:101.6px" width="8" height="8" viewBox="0 0 8 8"><circle cx="4" cy="4" r="3.4" fill="#fff" stroke="#4a4a4a" stroke-width="0.65"/><text x="4" y="5.700" font-size="4.8" font-weight="bold" text-anchor="middle" fill="#333" font-family="Liberation Sans">?</text></svg>
<div class="a t " style="left:701.0px;top:100px;font-size:8.3px;color:#555;">Еще</div>
<svg class="a" style="left:729.5px;top:104.5px" width="3.2" height="1.8" viewBox="0 0 3.2 1.8"><path d="M0 0H3.2L1.6 1.8z" fill="#444"/></svg>
<div class="a t " style="left:333.5px;top:116px;font-size:7.1px;">Элементы формы</div>
<div class="a t " style="left:526.6px;top:116px;font-size:7.1px;">Свойства элемента формы</div>
<div class="a box" style="left:333px;top:131px;width:190px;height:197px"></div>
<svg class="a" style="left:360.2px;top:135.8px" width="9.7" height="9.7" viewBox="0 0 9 9"><use href="#cbon"/></svg>
<svg class="a" style="left:375px;top:138.45px" width="8" height="4" viewBox="0 0 8 4"><path d="M1.9 2h3.8" stroke="#e6554b" stroke-width="2.3" stroke-linecap="round"/></svg>
<div class="a t " style="left:389.0px;top:135px;font-size:7.2px;width:133.0px;overflow:hidden;">Валюта</div>
<svg class="a" style="left:360.2px;top:152.2px" width="9.7" height="9.7" viewBox="0 0 9 9"><use href="#cbon"/></svg>
<svg class="a" style="left:375px;top:154.82px" width="8" height="4" viewBox="0 0 8 4"><path d="M1.9 2h3.8" stroke="#e6554b" stroke-width="2.3" stroke-linecap="round"/></svg>
<div class="a t " style="left:389.0px;top:151px;font-size:7.2px;width:133.0px;overflow:hidden;">Контрагент</div>
<svg class="a" style="left:360.2px;top:168.6px" width="9.7" height="9.7" viewBox="0 0 9 9"><use href="#cbon"/></svg>
<svg class="a" style="left:375px;top:171.19px" width="8" height="4" viewBox="0 0 8 4"><path d="M1.9 2h3.8" stroke="#e6554b" stroke-width="2.3" stroke-linecap="round"/></svg>
<div class="a t " style="left:389.0px;top:168px;font-size:7.2px;">Вид счета-факт</div>
<svg class="a" style="left:360.2px;top:185.0px" width="9.7" height="9.7" viewBox="0 0 9 9"><use href="#cbon"/></svg>
<svg class="a" style="left:375px;top:187.56px" width="8" height="4" viewBox="0 0 8 4"><path d="M1.9 2h3.8" stroke="#e6554b" stroke-width="2.3" stroke-linecap="round"/></svg>
<div class="a t " style="left:389.0px;top:184px;font-size:7.2px;width:133.0px;overflow:hidden;">Организация</div>
<svg class="a" style="left:360.2px;top:201.3px" width="9.7" height="9.7" viewBox="0 0 9 9"><use href="#cbon"/></svg>
<svg class="a" style="left:375px;top:203.93px" width="8" height="4" viewBox="0 0 8 4"><path d="M1.9 2h3.8" stroke="#e6554b" stroke-width="2.3" stroke-linecap="round"/></svg>
<div class="a t " style="left:389.0px;top:201px;font-size:7.2px;width:133.0px;overflow:hidden;">Оригинал</div>
<svg class="a" style="left:360.2px;top:217.7px" width="9.7" height="9.7" viewBox="0 0 9 9"><use href="#cbon"/></svg>
<svg class="a" style="left:375px;top:220.30px" width="8" height="4" viewBox="0 0 8 4"><path d="M1.9 2h3.8" stroke="#e6554b" stroke-width="2.3" stroke-linecap="round"/></svg>
<div class="a t " style="left:389.0px;top:217px;font-size:7.2px;width:133.0px;overflow:hidden;">Договор</div>
<svg class="a" style="left:360.2px;top:234.1px" width="9.7" height="9.7" viewBox="0 0 9 9"><use href="#cbon"/></svg>
<svg class="a" style="left:375px;top:236.67px" width="8" height="4" viewBox="0 0 8 4"><path d="M1.9 2h3.8" stroke="#e6554b" stroke-width="2.3" stroke-linecap="round"/></svg>
<div class="a t " style="left:389.0px;top:233px;font-size:7.2px;width:133.0px;overflow:hidden;">Документ-основание</div>
<svg class="a" style="left:360.2px;top:250.4px" width="9.7" height="9.7" viewBox="0 0 9 9"><use href="#cbon"/></svg>
<svg class="a" style="left:375px;top:253.04px" width="8" height="4" viewBox="0 0 8 4"><path d="M1.9 2h3.8" stroke="#e6554b" stroke-width="2.3" stroke-linecap="round"/></svg>
<div class="a t " style="left:389.0px;top:250px;font-size:7.2px;width:133.0px;overflow:hidden;">Комментарий</div>
<svg class="a" style="left:360.2px;top:266.8px" width="9.7" height="9.7" viewBox="0 0 9 9"><use href="#cbon"/></svg>
<svg class="a" style="left:375px;top:269.41px" width="8" height="4" viewBox="0 0 8 4"><path d="M1.9 2h3.8" stroke="#e6554b" stroke-width="2.3" stroke-linecap="round"/></svg>
<div class="a t " style="left:389.0px;top:266px;font-size:7.2px;width:133.0px;overflow:hidden;">Ответственный</div>
<svg class="a" style="left:360.2px;top:283.2px" width="9.7" height="9.7" viewBox="0 0 9 9"><use href="#cbon"/></svg>
<svg class="a" style="left:375px;top:285.78px" width="8" height="4" viewBox="0 0 8 4"><path d="M1.9 2h3.8" stroke="#e6554b" stroke-width="2.3" stroke-linecap="round"/></svg>
<div class="a t " style="left:389.0px;top:282px;font-size:7.2px;width:133.0px;overflow:hidden;">Состояние ЭДО</div>
<svg class="a" style="left:360.2px;top:299.6px" width="9.7" height="9.7" viewBox="0 0 9 9"><use href="#cboff"/></svg>
<svg class="a" style="left:375px;top:302.15px" width="8" height="4" viewBox="0 0 8 4"><path d="M1.9 2h3.8" stroke="#e6554b" stroke-width="2.3" stroke-linecap="round"/></svg>
<div class="a" style="left:386px;top:296px;width:31px;height:16px;background:#fde28f;border:1px solid #f5cc50"></div>
<div class="a t " style="left:389.0px;top:299px;font-size:7.2px;width:133.0px;overflow:hidden;">Ссылка</div>
<div class="a" style="left:514px;top:133px;width:8px;height:193px;background:#fff"></div>
<svg class="a" style="left:514px;top:224px" width="8" height="92" viewBox="0 0 8 92"><rect x="1.5" y="2" width="4.2" height="88" rx="2.1" fill="#9a9a9a"/></svg>
<svg class="a" style="left:516.0px;top:319.8px" width="3.2" height="1.8" viewBox="0 0 3.2 1.8"><path d="M0 0H3.2L1.6 1.8z" fill="#aaa"/></svg>
<div class="a box" style="left:527px;top:131px;width:213px;height:197px"></div>
<div class="a inp" style="left:531px;top:136px;width:206px;height:25px"></div>
<div class="a t " style="left:628.5px;top:137px;">Ссылка</div>
<svg class="a" style="left:628.0px;top:161.5px" width="9" height="9" viewBox="0 0 9 9"><use href="#cbon"/></svg>
<div class="a inp" style="left:531px;top:173px;width:206px;height:25px"></div>
<svg class="a" style="left:628.0px;top:200.5px" width="9" height="9" viewBox="0 0 9 9"><use href="#cboff"/></svg>
<div class="a inp" style="left:531px;top:210px;width:206px;height:12px"></div>
<div class="a" style="left:724px;top:211px;width:1px;height:10px;background:#d6d6d6"></div>
<svg class="a" style="left:729.0px;top:215.2px" width="3.2" height="1.8" viewBox="0 0 3.2 1.8"><path d="M0 0H3.2L1.6 1.8z" fill="#444"/></svg>
<div class="a t " style="left:628.3px;top:211px;">Авто</div>
<div class="a inp" style="left:531px;top:223px;width:206px;height:12px"></div>
<div class="a" style="left:724px;top:224px;width:1px;height:10px;background:#d6d6d6"></div>
<svg class="a" style="left:729.0px;top:228.2px" width="3.2" height="1.8" viewBox="0 0 3.2 1.8"><path d="M0 0H3.2L1.6 1.8z" fill="#444"/></svg>
<div class="a t " style="left:628.3px;top:224px;">Авто</div>
<div class="a inp" style="left:531px;top:248px;width:206px;height:12px"></div>
<div class="a" style="left:724px;top:249px;width:1px;height:10px;background:#d6d6d6"></div>
<svg class="a" style="left:729.0px;top:253.2px" width="3.2" height="1.8" viewBox="0 0 3.2 1.8"><path d="M0 0H3.2L1.6 1.8z" fill="#444"/></svg>
<div class="a t " style="left:628.3px;top:249px;">Нет</div>
<svg class="a" style="left:628.0px;top:237.5px" width="9" height="9" viewBox="0 0 9 9"><use href="#cboff"/></svg>
<div class="a" style="left:531px;top:265px;width:206px;height:1px;background:#ececec"></div>
<div class="a t " style="left:636.3px;top:271px;">Высота</div>
<div class="a inp" style="left:665px;top:270px;width:45px;height:12px"></div>
<div class="a t d" style="left:691.7px;top:271px;">0</div>
<div class="a" style="left:697px;top:271px;width:1px;height:10px;background:#d6d6d6"></div>
<div class="a" style="left:697px;top:276px;width:12px;height:1px;background:#e0e0e0"></div>
<svg class="a" style="left:701.8px;top:272.9px" width="2.6" height="1.5" viewBox="0 0 2.6 1.5"><path d="M0 1.5H2.6L1.3 0z" fill="#555"/></svg>
<svg class="a" style="left:701.8px;top:278.3px" width="2.6" height="1.5" viewBox="0 0 2.6 1.5"><path d="M0 0H2.6L1.3 1.5z" fill="#555"/></svg>
<div class="a" style="left:530px;top:297px;width:207px;height:1px;background:#aeaeae"></div>
<div class="a dbtn" style="left:586px;top:331px;width:49px;height:13px"></div>
<div class="a t" style="left:586px;width:49px;top:332px;text-align:center;font-size:8.2px;color:#505050">OK</div>
<div class="a dbtn" style="left:639px;top:331px;width:48px;height:13px"></div>
<div class="a t" style="left:639px;width:48px;top:332px;text-align:center;font-size:7.4px;color:#505050">Отмена</div>
<div class="a dbtn" style="left:691px;top:331px;width:49px;height:13px"></div>
<div class="a t" style="left:691px;width:49px;top:332px;text-align:center;font-size:7.1px;color:#b9b9b9">Применить</div>
<div class="a dlg" style="left:441px;top:136px;width:191px;height:147px"></div>
<div class="a t " style="left:448.6px;top:142px;font-size:10.6px;color:#000;-webkit-text-stroke:0.15px #000;">Выберите поля для размещен...</div>
<svg class="a" style="left:617px;top:145px" width="6.400" height="6.400" viewBox="0 0 6.4 6.4"><path d="M0.6 0.6l5.200 5.200M5.800 0.600l-5.200 5.200" stroke="#4c4c4c" stroke-width="0.95" fill="none"/></svg>
<div class="a box" style="left:446px;top:164px;width:126px;height:114px"></div>
<svg class="a" style="left:450.8px;top:167.9px" width="9.7" height="9.7" viewBox="0 0 9 9"><use href="#cboff"/></svg>
<div class="a t " style="left:465.3px;top:167px;">Субкомиссионер</div>
<svg class="a" style="left:450.8px;top:184.3px" width="9.7" height="9.7" viewBox="0 0 9 9"><use href="#cboff"/></svg>
<div class="a t " style="left:465.3px;top:183px;">Всего</div>
<svg class="a" style="left:450.8px;top:200.7px" width="9.7" height="9.7" viewBox="0 0 9 9"><use href="#cboff"/></svg>
<div class="a t " style="left:465.3px;top:200px;">Всего (комиссия)</div>
<div class="a" style="left:447px;top:214px;width:117px;height:16px;background:#fde28f;border:1px solid #f7d162"></div>
<svg class="a" style="left:450.8px;top:217.1px" width="9.7" height="9.7" viewBox="0 0 9 9"><use href="#cbon"/></svg>
<div class="a t " style="left:465.3px;top:216px;">НДС (в т.ч.)</div>
<svg class="a" style="left:450.8px;top:233.5px" width="9.7" height="9.7" viewBox="0 0 9 9"><use href="#cboff"/></svg>
<div class="a t " style="left:465.3px;top:233px;">НДС (в т.ч.) - комиссия</div>
<svg class="a" style="left:450.8px;top:249.9px" width="9.7" height="9.7" viewBox="0 0 9 9"><use href="#cboff"/></svg>
<div class="a t " style="left:465.3px;top:249px;">НДС увеличение</div>
<svg class="a" style="left:450.8px;top:266.3px" width="9.7" height="9.7" viewBox="0 0 9 9"><use href="#cboff"/></svg>
<div class="a t " style="left:465.3px;top:265px;">НДС увеличение (комисс...</div>
<div class="a" style="left:564.8px;top:165px;width:6px;height:112px;background:#fff"></div>
<svg class="a" style="left:565px;top:169.4px" width="3.8" height="2.3" viewBox="0 0 3.8 2.3"><path d="M0 2.3H3.8L1.9 0z" fill="#444"/></svg>
<svg class="a" style="left:565.2px;top:269.8px" width="3.8" height="2.3" viewBox="0 0 3.8 2.3"><path d="M0 0H3.8L1.9 2.3z" fill="#444"/></svg>
<div class="a" style="left:565.2px;top:178px;width:3.4px;height:87px;background:#cacaca;border-radius:1.7px"></div>
<div class="a" style="left:565.2px;top:238px;width:3.4px;height:7.5px;background:#6e6e6e;border-radius:1.7px"></div>
<div class="a dbtn" style="left:576px;top:164px;width:51px;height:12px"></div>
<div class="a t" style="left:576px;width:51px;top:164px;text-align:center;font-size:8.2px;color:#505050">OK</div>
<div class="a dbtn" style="left:576px;top:181px;width:51px;height:11px"></div>
<div class="a t" style="left:576px;width:51px;top:181px;text-align:center;font-size:7.4px;color:#505050">Отмена</div>
<div class="a dbtn" style="left:576px;top:267px;width:51px;height:11px"></div>
<div class="a t" style="left:576px;width:51px;top:267px;text-align:center;font-size:7.4px;color:#505050">Справка</div>
<svg class="a" style="left:570px;top:150px" width="64" height="36" viewBox="570 150 64 36"><rect x="574.95" y="155.75" width="52.9" height="23.1" rx="1" fill="none" stroke="#0a0ae6" stroke-width="1.55"/></svg>
<svg class="a" style="left:444px;top:208px" width="98" height="28" viewBox="444 208 98 28"><rect x="448.8" y="213.1" width="88" height="19.5" rx="1" fill="none" stroke="#0a0ae6" stroke-width="1.55"/></svg>
</body></html>
